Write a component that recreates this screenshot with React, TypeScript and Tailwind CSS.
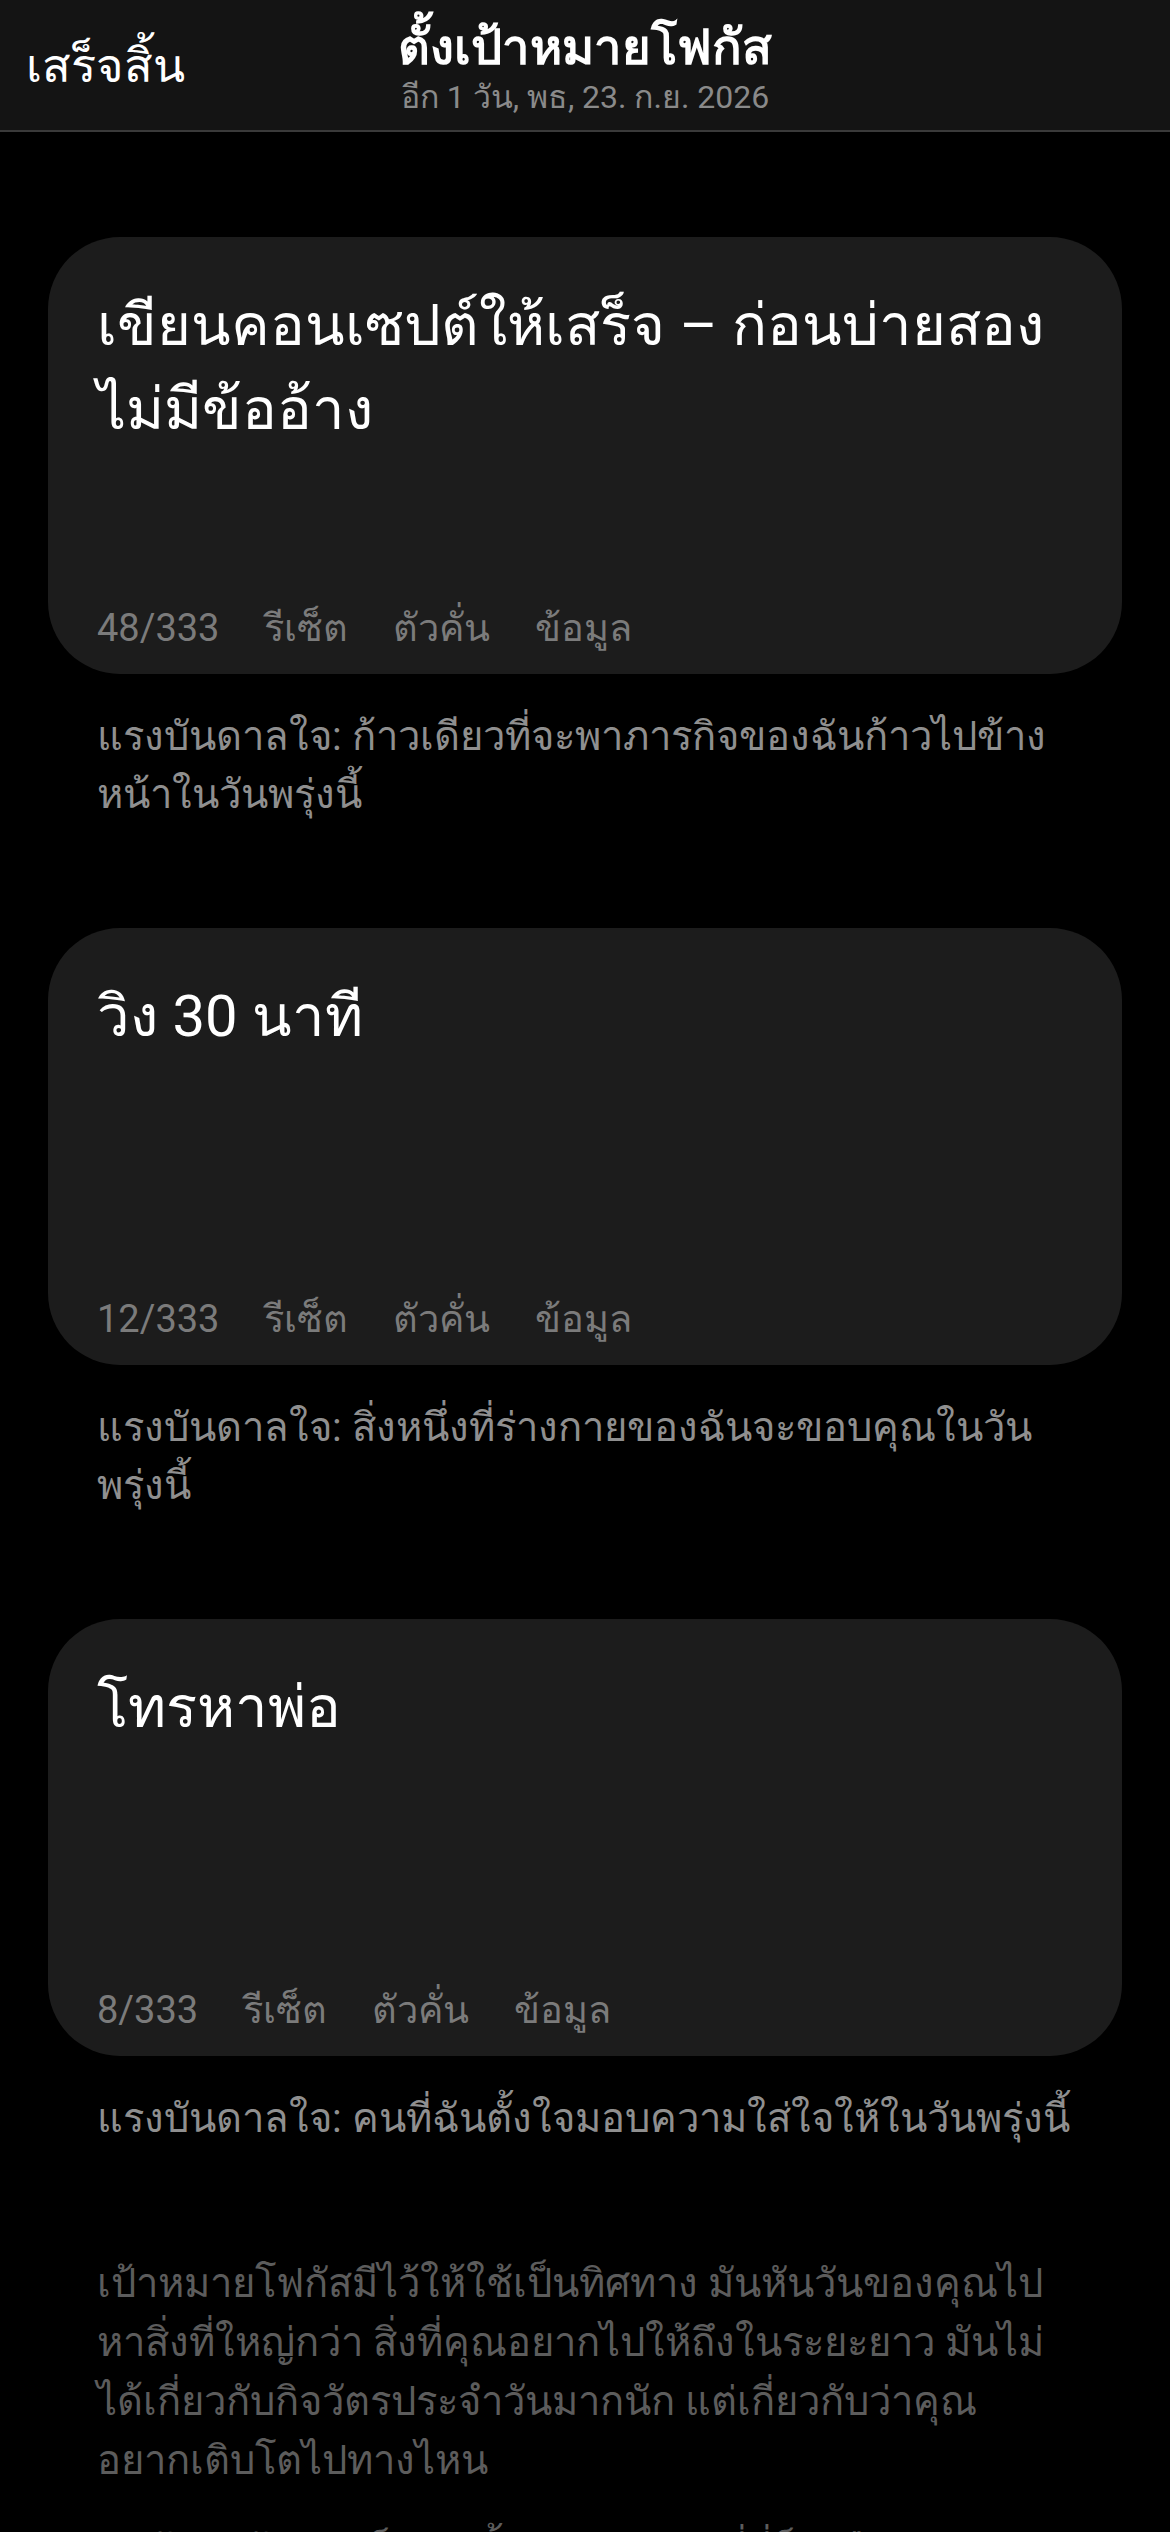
import React from "react";

type Goal = {
  title: string;
  count: string;
  note: string;
};

const goals: Goal[] = [
  {
    title: "เขียนคอนเซปต์ให้เสร็จ – ก่อนบ่ายสอง ไม่มีข้ออ้าง",
    count: "48/333",
    note: "แรงบันดาลใจ: ก้าวเดียวที่จะพาภารกิจของฉันก้าวไปข้างหน้าในวันพรุ่งนี้",
  },
  {
    title: "วิง 30 นาที",
    count: "12/333",
    note: "แรงบันดาลใจ: สิ่งหนึ่งที่ร่างกายของฉันจะขอบคุณในวันพรุ่งนี้",
  },
  {
    title: "โทรหาพ่อ",
    count: "8/333",
    note: "แรงบันดาลใจ: คนที่ฉันตั้งใจมอบความใส่ใจให้ในวันพรุ่งนี้",
  },
];

const font = "font-['Roboto','Noto_Sans','DejaVu_Sans',sans-serif]";

const GoalCard: React.FC<{ goal: Goal }> = ({ goal }) => {
  return (
    <div>
      <div className="mx-[48px] h-[437px] rounded-[72px] bg-[#1c1c1c] px-[49px] pt-[46px] pb-[17px] flex flex-col justify-between">
        <h2 className="text-[58px] leading-[84px] text-white">{goal.title}</h2>
        <div className="flex items-center gap-x-[45px] text-[38px] text-[#7b7b7b]">
          <span>{goal.count}</span>
          <span>รีเซ็ต</span>
          <span>ตัวคั่น</span>
          <span>ข้อมูล</span>
        </div>
      </div>
      <p className="mx-[97px] mt-[34px] text-[40px] leading-[58px] text-[#8f8f8f]">
        {goal.note}
      </p>
    </div>
  );
};

export default function App() {
  return (
    <div className={`${font} min-h-[2532px] w-[1170px] bg-black overflow-hidden`}>
      <header className="relative h-[132px] bg-[#141414] border-b-2 border-[#3a3a3a] flex items-center">
        <button className="absolute left-[26px] top-[33px] text-[47px] leading-[66px] text-white">
          เสร็จสิ้น
        </button>
        <div className="flex-1 flex flex-col items-center pt-[4px]">
          <h1 className="text-[49px] leading-[60px] font-bold text-white">ตั้งเป้าหมายโฟกัส</h1>
          <p className="text-[32px] leading-[38px] text-[#8a8a8a]">อีก 1 วัน, พธ, 23. ก.ย. 2026</p>
        </div>
      </header>

      <main className="pt-[105px] flex flex-col gap-y-[104px]">
        {goals.map((g) => (
          <GoalCard key={g.count} goal={g} />
        ))}
      </main>

      <div className="ml-[97px] mr-[110px] mt-[106px] text-[40px] leading-[59px] text-[#5c5c5c]">
        <p>
          เป้าหมายโฟกัสมีไว้ให้ใช้เป็นทิศทาง มันหันวันของคุณไปหาสิ่งที่ใหญ่กว่า สิ่งที่คุณอยากไปให้ถึงในระยะยาว มันไม่ได้เกี่ยวกับกิจวัตรประจำวันมากนัก แต่เกี่ยวกับว่าคุณอยากเติบโตไปทางไหน
        </p>
        <p className="mt-[32px]">
          สุดท้ายแล้วคุณเป็นคนตั้งกติกาเอง – ที่นี่ก็เหมือนกัน
        </p>
      </div>
    </div>
  );
}
